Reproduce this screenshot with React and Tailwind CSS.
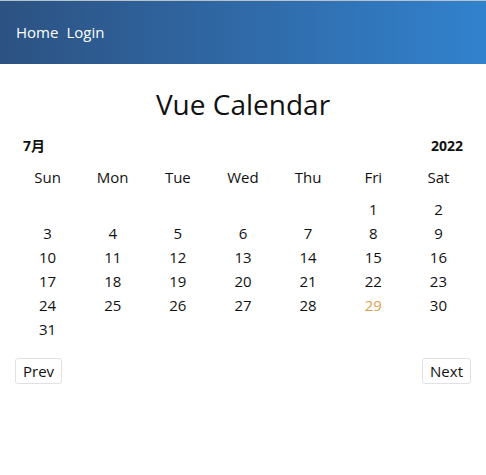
import { useState } from "react";

const DAYS = ["Sun", "Mon", "Tue", "Wed", "Thu", "Fri", "Sat"];
const TODAY = 29;

function buildCells(year, month) {
  const first = new Date(year, month, 1).getDay();
  const count = new Date(year, month + 1, 0).getDate();
  const cells = Array(first).fill(null);
  for (let d = 1; d <= count; d++) cells.push(d);
  while (cells.length % 7) cells.push(null);
  return cells;
}

export default function App() {
  const [view] = useState({ year: 2022, month: 6 });
  const cells = buildCells(view.year, view.month);
  const weeks = [];
  for (let i = 0; i < cells.length; i += 7) weeks.push(cells.slice(i, i + 7));

  return (
    <div className="min-h-[475px] bg-white text-[#111] font-['Segoe_UI','Open_Sans','Noto_Sans_CJK_JP',sans-serif]">
      {/* Nav */}
      <nav className="h-16 border-t border-[#b8c2cc] bg-gradient-to-r from-[#2c5282] to-[#3182ce] flex items-center gap-2 px-4 text-white text-[15px]">
        <a href="#">Home</a>
        <a href="#">Login</a>
      </nav>

      <div className="px-[15px]">
        <h1 className="text-center text-[28px] leading-[38px] mt-[21px] mb-[9px]">Vue Calendar</h1>

        <div className="grid grid-cols-7">
          <div className="col-span-7 flex justify-between px-2 h-[26px] items-center font-bold text-[14px]">
            <span>{view.month + 1}月</span>
            <span>{view.year}</span>
          </div>
          {DAYS.map((d) => (
            <div key={d} className="text-center h-[39px] leading-[38px] text-[15px]">
              {d}
            </div>
          ))}
          {weeks.map((w, wi) =>
            w.map((d, di) => (
              <div
                key={`${wi}-${di}`}
                className={`text-center h-6 leading-6 text-[15px] ${d === TODAY ? "text-[#e0a050]" : ""}`}
              >
                {d ?? ""}
              </div>
            ))
          )}
        </div>

        <div className="flex justify-between mt-[17px]">
          <button className="h-[26px] px-[7px] border border-[#dee2e6] rounded-[3px] text-[15px] bg-white">Prev</button>
          <button className="h-[26px] px-[7px] border border-[#dee2e6] rounded-[3px] text-[15px] bg-white">Next</button>
        </div>
      </div>
    </div>
  );
}
